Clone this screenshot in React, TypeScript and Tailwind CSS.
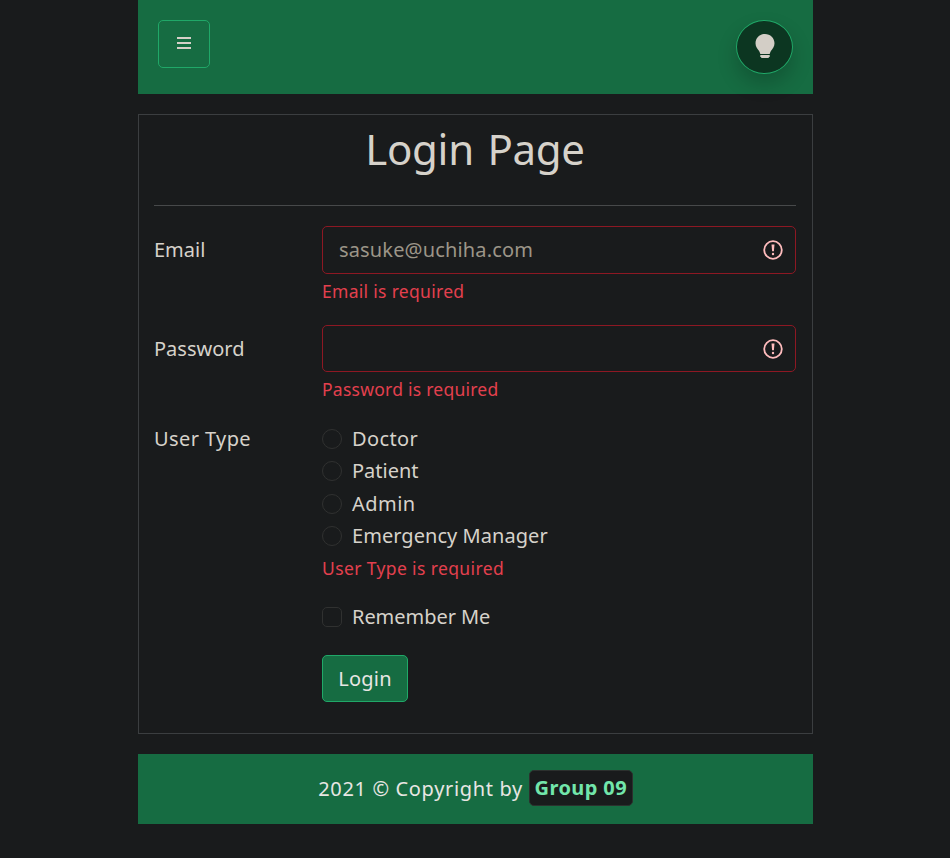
import React from "react";

const userTypes = [
  { label: "Doctor", spacing: "tracking-[0.4px]", height: "h-8" },
  { label: "Patient", spacing: "tracking-[0px]", height: "h-8" },
  { label: "Admin", spacing: "tracking-[0.45px]", height: "h-[33px] pt-px" },
  { label: "Emergency Manager", spacing: "tracking-[0.05px]", height: "h-8" },
];

function MenuIcon() {
  return (
    <svg width="16" height="14" viewBox="0 0 16 14" fill="#d5d0c8" className="block">
      <rect x="1" y="1" width="14" height="2" />
      <rect x="1" y="6" width="14" height="2" />
      <rect x="1" y="11" width="14" height="2" />
    </svg>
  );
}

function BulbIcon() {
  return (
    <svg width="20" height="25" viewBox="0 0 20 25" fill="#d3cec6" className="block">
      <path d="M10 0C4.600 0 .5 4.100.5 9.300c0 3.500 1.800 5.200 3.600 7.700.5.8.8 1.600 1 2.500.1.400.4.5.8.5h8.200c.4 0 .7-.1.8-.5.2-.9.5-1.700 1-2.500 1.800-2.500 3.600-4.200 3.600-7.700C19.500 4.100 15.400 0 10 0Z" />
      <path d="M5.300 21h9.400v1.200L13.400 24H6.600l-1.300-1.800Z" />
    </svg>
  );
}

function ErrorIcon() {
  return (
    <svg width="20" height="20" viewBox="0 0 20 20" className="block shrink-0">
      <circle cx="10" cy="10" r="8.800" fill="none" stroke="#ffbcbd" strokeWidth="1.800" />
      <path d="M8.500 4.500h3l-.6 6.800H9.100Z" fill="#ffbcbd" />
      <circle cx="10" cy="14" r="1.200" fill="#ffbcbd" />
    </svg>
  );
}

export default function App() {
  return (
    <div className="h-[858px] bg-[#191b1c] font-['Noto_Sans',sans-serif] text-[20px] leading-[30px] text-[#d6d2ca]">
      <div className="ml-[138px] w-[675px]">
        <header className="flex h-[94px] items-start justify-between bg-[#166c42] p-5">
          <button aria-label="Menu" className="flex h-12 w-[52px] items-center justify-center rounded-[5px] border border-[#20a868] pb-0.5">
            <MenuIcon />
          </button>
          <button aria-label="Theme" className="flex h-[54px] w-[57px] items-center justify-center rounded-[50%] border border-[#20a868] bg-[#0c3621] pb-px shadow-[0_10px_20px_rgba(0,0,0,0.2)]">
            <BulbIcon />
          </button>
        </header>

        <main className="mt-5 h-[620px] border border-[#3b3e40] pr-4 pl-[15px]">
          <h1 className="h-[90px] pt-[9px] text-center text-[42px] leading-[50px] tracking-[-0.3px] [word-spacing:3px]">Login Page</h1>
          <hr className="m-0 border-t border-[#47494a]" />
          <div className="mt-5 flex">
            <label className="w-[168px] pt-[9px]">Email</label>
            <div className="flex-1">
              <div className="flex h-12 items-center justify-between rounded-[5px] border border-[#8d1823] pr-[12.500px] pl-4">
                <span className="tracking-[0.15px] text-[#9c9588]">sasuke@uchiha.com</span>
                <ErrorIcon />
              </div>
              <p className="mt-1 mb-px h-[26px] text-[17.5px] leading-[26px] tracking-[0.3px] text-[#e3404e]">Email is required</p>
            </div>
          </div>
          <div className="mt-5 flex">
            <label className="w-[168px] pt-[9px]">Password</label>
            <div className="flex-1">
              <div className="flex h-[47px] items-center justify-end rounded-[5px] border border-[#8d1823] pr-[12.500px]">
                <ErrorIcon />
              </div>
              <p className="mt-1 mb-px h-[26px] text-[17.5px] leading-[26px] tracking-[0.25px] text-[#e3404e]">Password is required</p>
            </div>
          </div>
          <div className="mt-5 flex">
            <div className="w-[168px] pt-px tracking-[0.4px]">User Type</div>
            <div className="flex-1">
              {userTypes.map((type) => (
                <label key={type.label} className={`flex items-center gap-[10px] ${type.height}`}>
                  <span className="size-5 rounded-full border border-[#303130]" />
                  <span className={type.spacing}>{type.label}</span>
                </label>
              ))}
              <p className="mt-[3px] h-[26px] text-[17.5px] leading-[26px] tracking-[0.38px] text-[#e3404e]">User Type is required</p>
              <label className="mt-5 flex h-[32px] items-center gap-[10px]">
                <span className="size-5 rounded-[5px] border border-[#303130]" />
                <span className="tracking-[-0.05px]">Remember Me</span>
              </label>
              <button className="mt-[22px] flex h-[47px] w-[86px] items-center justify-center rounded-[5px] border border-[#20a868] bg-[#166c42] tracking-[0.2px] text-[#e8e6e3]">Login</button>
            </div>
          </div>
        </main>

        <footer className="mt-5 flex h-[70px] items-center justify-center gap-[6px] bg-[#166c42] pb-[2px] text-[#e8e6e3]">
          <span className="pt-px tracking-[0.65px]">2021 © Copyright by</span>
          <span className="flex h-9 w-[104px] items-center justify-center rounded-[5px] border border-[#2c302e] bg-[#191b1c] font-bold tracking-[0.4px] text-[#72e6ab]">Group 09</span>
        </footer>
      </div>
    </div>
  );
}
